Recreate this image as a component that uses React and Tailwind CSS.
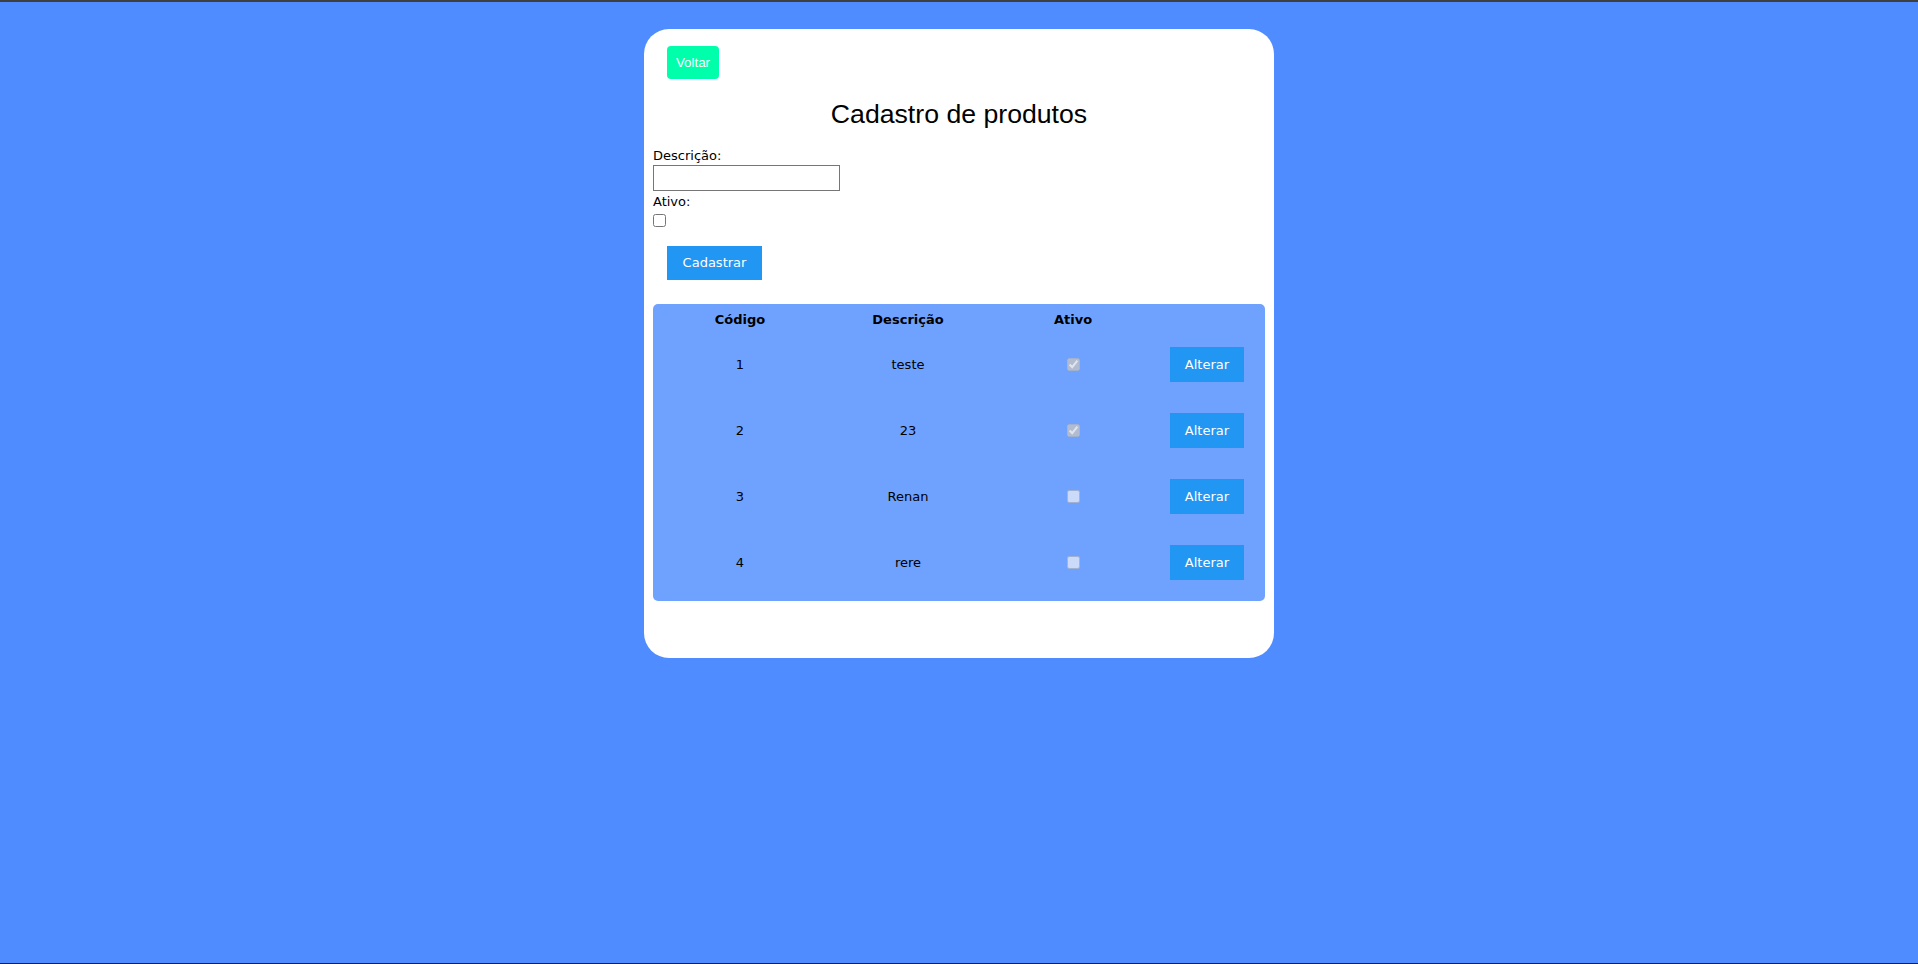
import React from "react";

const rows = [
  { id: 1, desc: "teste", ativo: true },
  { id: 2, desc: "23", ativo: true },
  { id: 3, desc: "Renan", ativo: false },
  { id: 4, desc: "rere", ativo: false },
];

export default function App() {
  return (
    <div className="flex h-[964px] w-full flex-col border-t-2 border-b border-t-[#3f3f3f] border-b-[#1b2130] bg-[#4f8cff]">
      <div className="mx-auto mt-[27px] flex h-[629px] w-[630px] flex-col rounded-[25px] bg-white px-[9px]">
        <button className="ml-[14px] mt-[17px] flex h-[33px] w-[52px] items-center justify-center rounded-[4px] bg-[#00ffaa] font-['Liberation_Sans',Arial,sans-serif] text-[13.33px] text-white">
          Voltar
        </button>
        <h1 className="mt-[20px] h-[31px] text-center font-['Liberation_Sans',Arial,sans-serif] text-[26.67px] leading-[31px] font-normal text-black">
          Cadastro de produtos
        </h1>
        <div className="font-['DejaVu_Sans',Verdana,sans-serif] text-[13px] text-black">
          <label className="mt-[18px] block h-[15px] leading-[15px]">Descrição:</label>
          <input
            type="text"
            className="mt-[2px] block h-[26px] w-[187px] border border-[#767676] bg-white px-[2px] text-[13px]"
          />
          <label className="mt-[3px] block h-[15px] leading-[15px]">Ativo:</label>
          <input type="checkbox" className="mt-[5px] block h-[13px] w-[13px]" />
          <button className="ml-[14px] mt-[19px] flex h-[34px] w-[95px] items-center justify-center bg-[#2196f3] text-[13px] text-white">
            Cadastrar
          </button>
        </div>
        <div className="mt-[24px] h-[297px] rounded-[5px] bg-[#6fa2ff] font-['DejaVu_Sans',Verdana,sans-serif] text-[13px] text-black">
          <div className="grid h-[27px] grid-cols-[174px_162px_168px_100px] pt-[8px] text-center font-bold leading-[15px]">
            <div>Código</div>
            <div>Descrição</div>
            <div>Ativo</div>
            <div></div>
          </div>
          {rows.map((r) => (
            <div
              key={r.id}
              className="grid h-[66px] grid-cols-[174px_162px_168px_100px] items-center text-center leading-[15px]"
            >
              <div>{r.id}</div>
              <div>{r.desc}</div>
              <div className="flex justify-center">
                <input
                  type="checkbox"
                  disabled
                  defaultChecked={r.ativo}
                  className="h-[13px] w-[13px]"
                />
              </div>
              <div className="flex justify-center">
                <button className="flex h-[35px] w-[74px] items-center justify-center bg-[#2196f3] text-[13px] text-white">
                  Alterar
                </button>
              </div>
            </div>
          ))}
        </div>
      </div>
    </div>
  );
}
